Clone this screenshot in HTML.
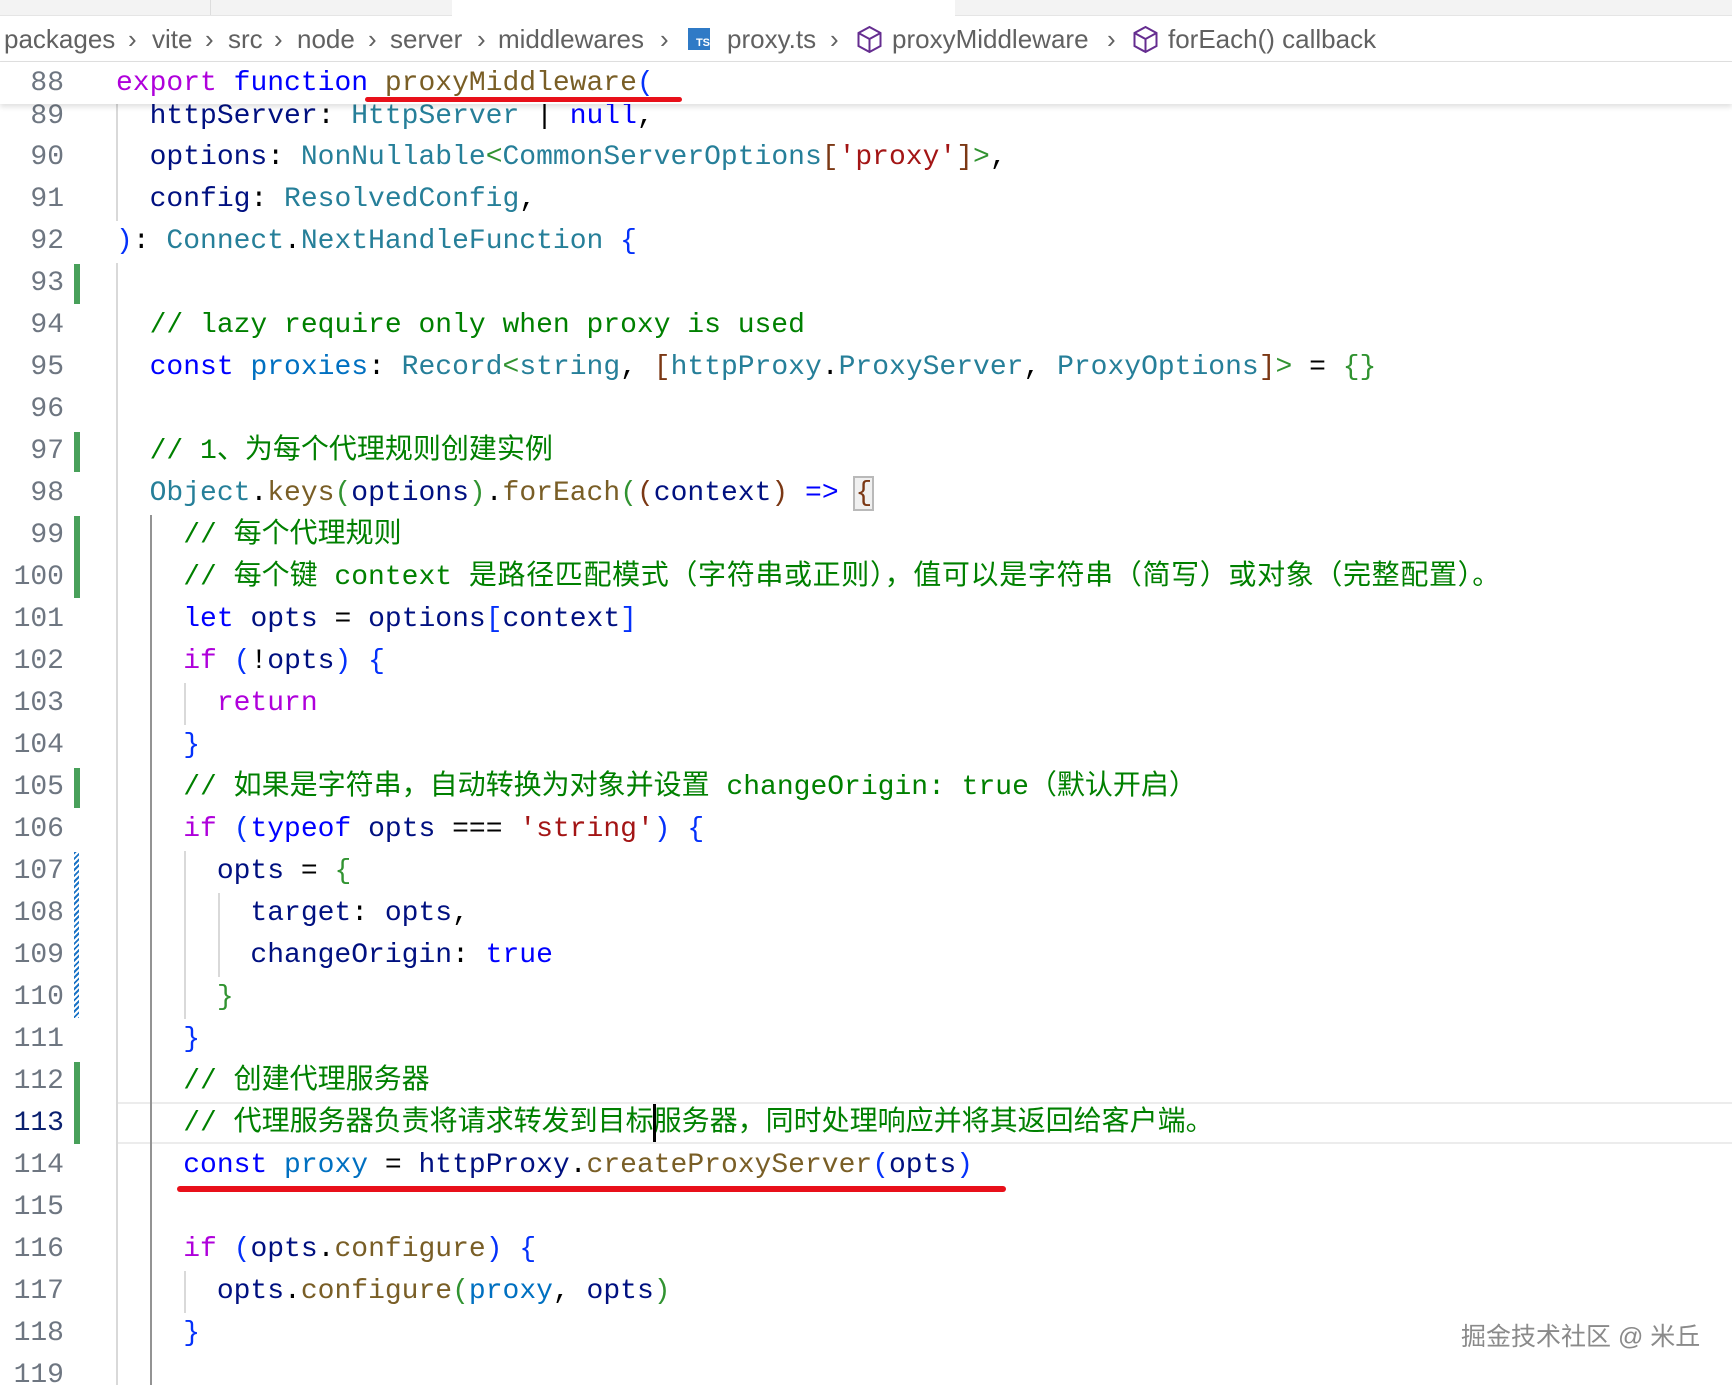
<!DOCTYPE html>
<html><head><meta charset="utf-8"><style>
body{margin:0;width:1732px;height:1382px;overflow:hidden;background:#fff;position:relative;font-family:"Liberation Mono","Noto Sans CJK SC",monospace;}
.tabs{position:absolute;left:0;top:0;width:1732px;height:15px;background:#f3f3f3;border-bottom:1px solid #e5e5e5}
.bc{position:absolute;top:0;height:61px;left:0;width:1732px;border-bottom:2px solid #e0e0e0;font-family:"Liberation Sans",sans-serif;font-size:26px;color:#616161}
.bc span{position:absolute;top:24px;white-space:nowrap}
.nums{position:absolute;left:0;top:95.5px;width:64px;text-align:right;font-size:28px;line-height:41.97px;color:#6e7681;white-space:pre}
.code{position:absolute;left:116px;top:95.5px;font-size:28px;line-height:41.97px;color:#000;white-space:pre}
.k{color:#af00db}.b{color:#0000ff}.f{color:#795e26}.v{color:#001080}.t{color:#267f99}.s{color:#a31515}.c{color:#008000}.p1{color:#0431fa}.p2{color:#319331}.p3{color:#7b3814}.cv{color:#0070c1}
.g{position:absolute;width:2px;background:#d9d9d9}
.gm{position:absolute;left:74px;width:6px;background:#48a05a}
</style></head><body>
<div class="tabs"><div style="position:absolute;left:452px;top:0;width:503px;height:16px;background:#fff"></div><div style="position:absolute;left:210px;top:0;width:1px;height:15px;background:#ddd"></div></div>
<div class="bc">
<span style="left:4px">packages</span><span style="left:128px">›</span>
<span style="left:152px">vite</span><span style="left:205px">›</span>
<span style="left:228px">src</span><span style="left:274px">›</span>
<span style="left:297px">node</span><span style="left:368px">›</span>
<span style="left:390px">server</span><span style="left:477px">›</span>
<span style="left:498px">middlewares</span><span style="left:660px">›</span>
<span style="left:688px;top:28px;width:22px;height:22px;background:#2f7ac6;color:#fff;font-size:11px;font-weight:bold;text-align:right;line-height:30px">TS</span>
<span style="left:727px">proxy.ts</span><span style="left:830px">›</span>
<svg style="position:absolute;left:856px;top:25px" width="27" height="29" viewBox="0 0 27 29"><path d="M13.5 2 L24.5 8 L24.5 21 L13.5 27 L2.5 21 L2.5 8 Z M2.5 8 L13.5 14 L24.5 8 M13.5 14 L13.5 27" fill="none" stroke="#652d90" stroke-width="2"/></svg>
<span style="left:892px">proxyMiddleware</span><span style="left:1107px">›</span>
<svg style="position:absolute;left:1132px;top:25px" width="27" height="29" viewBox="0 0 27 29"><path d="M13.5 2 L24.5 8 L24.5 21 L13.5 27 L2.5 21 L2.5 8 Z M2.5 8 L13.5 14 L24.5 8 M13.5 14 L13.5 27" fill="none" stroke="#652d90" stroke-width="2"/></svg>
<span style="left:1168px">forEach() callback</span>
</div>

<div style="position:absolute;left:118px;top:1102px;width:1614px;height:38px;border-top:2px solid #ececec;border-bottom:2px solid #ececec"></div>

<div class="g" style="left:116px;top:95px;height:126px"></div>
<div class="g" style="left:116px;top:263px;height:1122px"></div>
<div class="g" style="left:150px;top:515px;height:870px;background:#939393"></div>
<div class="g" style="left:184px;top:683px;height:42px"></div>
<div class="g" style="left:184px;top:851px;height:168px"></div>
<div class="g" style="left:184px;top:1271px;height:42px"></div>
<div class="g" style="left:218px;top:893px;height:84px"></div>

<div class="gm" style="top:264px;height:40px"></div>
<div class="gm" style="top:432px;height:40px"></div>
<div class="gm" style="top:516px;height:82px"></div>
<div class="gm" style="top:768px;height:40px"></div>
<div class="gm" style="top:1062px;height:82px"></div>
<div style="position:absolute;left:74px;top:852px;width:5px;height:166px;background:repeating-linear-gradient(135deg,#1a73c6 0 2px,#fff 2px 4px)"></div>

<div class="nums">89
90
91
92
93
94
95
96
97
98
99
100
101
102
103
104
105
106
107
108
109
110
111
112
<span style="color:#0b216f">113</span>
114
115
116
117
118
119</div>

<div class="code">  <span class="v">httpServer</span>: <span class="t">HttpServer</span> | <span class="b">null</span>,
  <span class="v">options</span>: <span class="t">NonNullable</span><span class="p2">&lt;</span><span class="t">CommonServerOptions</span><span class="p3">[</span><span class="s">'proxy'</span><span class="p3">]</span><span class="p2">&gt;</span>,
  <span class="v">config</span>: <span class="t">ResolvedConfig</span>,
<span class="p1">)</span>: <span class="t">Connect</span>.<span class="t">NextHandleFunction</span> <span class="p1">{</span>

  <span class="c">// lazy require only when proxy is used</span>
  <span class="b">const</span> <span class="cv">proxies</span>: <span class="t">Record</span><span class="p2">&lt;</span><span class="t">string</span>, <span class="p3">[</span><span class="t">httpProxy</span>.<span class="t">ProxyServer</span>, <span class="t">ProxyOptions</span><span class="p3">]</span><span class="p2">&gt;</span> = <span class="p2">{}</span>

  <span class="c">// 1、为每个代理规则创建实例</span>
  <span class="t">Object</span>.<span class="f">keys</span><span class="p2">(</span><span class="v">options</span><span class="p2">)</span>.<span class="f">forEach</span><span class="p2">(</span><span class="p3">(</span><span class="v">context</span><span class="p3">)</span> <span class="b">=&gt;</span> <span class="p3" style="outline:2px solid #b9b9b9;background:#f0f0f0">{</span>
    <span class="c">// 每个代理规则</span>
    <span class="c">// 每个键 context <span style="letter-spacing:0.65px">是路径匹配模式（字符串或正则），值可以是字符串（简写）或对象（完整配置）。</span></span>
    <span class="b">let</span> <span class="v">opts</span> = <span class="v">options</span><span class="p1">[</span><span class="v">context</span><span class="p1">]</span>
    <span class="k">if</span> <span class="p1">(</span>!<span class="v">opts</span><span class="p1">)</span> <span class="p1">{</span>
      <span class="k">return</span>
    <span class="p1">}</span>
    <span class="c">// 如果是字符串，自动转换为对象并设置 changeOrigin: true（默认开启）</span>
    <span class="k">if</span> <span class="p1">(</span><span class="b">typeof</span> <span class="v">opts</span> === <span class="s">'string'</span><span class="p1">)</span> <span class="p1">{</span>
      <span class="v">opts</span> = <span class="p2">{</span>
        <span class="v">target</span>: <span class="v">opts</span>,
        <span class="v">changeOrigin</span>: <span class="b">true</span>
      <span class="p2">}</span>
    <span class="p1">}</span>
    <span class="c">// 创建代理服务器</span>
    <span class="c">// 代理服务器负责将请求转发到目标服务器，同时处理响应并将其返回给客户端。</span>
    <span class="b">const</span> <span class="cv">proxy</span> = <span class="v">httpProxy</span>.<span class="f">createProxyServer</span><span class="p1">(</span><span class="v">opts</span><span class="p1">)</span>

    <span class="k">if</span> <span class="p1">(</span><span class="v">opts</span>.<span class="f">configure</span><span class="p1">)</span> <span class="p1">{</span>
      <span class="v">opts</span>.<span class="f">configure</span><span class="p2">(</span><span class="cv">proxy</span>, <span class="v">opts</span><span class="p2">)</span>
    <span class="p1">}</span>
</div>

<div style="position:absolute;left:653px;top:1104px;width:3px;height:38px;background:#000"></div>

<div style="position:absolute;left:0;top:62px;width:1732px;height:42px;background:#fff;box-shadow:0 3px 5px rgba(0,0,0,0.12)">
<div style="position:absolute;left:0;top:1px;width:64px;text-align:right;font-size:28px;line-height:42px;color:#6e7681">88</div>
<div style="position:absolute;left:116px;top:1px;font-size:28px;line-height:42px;white-space:pre"><span class="k">export</span> <span class="b">function</span> <span class="f">proxyMiddleware</span><span class="p1">(</span></div>
</div>

<div style="position:absolute;left:365px;top:97px;width:317px;height:5px;background:#e8101a;border-radius:3px"></div>
<div style="position:absolute;left:177px;top:1186px;width:829px;height:6px;background:#e8101a;border-radius:3px"></div>

<div style="position:absolute;left:1461px;top:1317px;font-family:'Liberation Sans','Noto Sans CJK SC',sans-serif;font-size:25px;color:#8a8a8a">掘金技术社区 @ 米丘</div>
</body></html>
